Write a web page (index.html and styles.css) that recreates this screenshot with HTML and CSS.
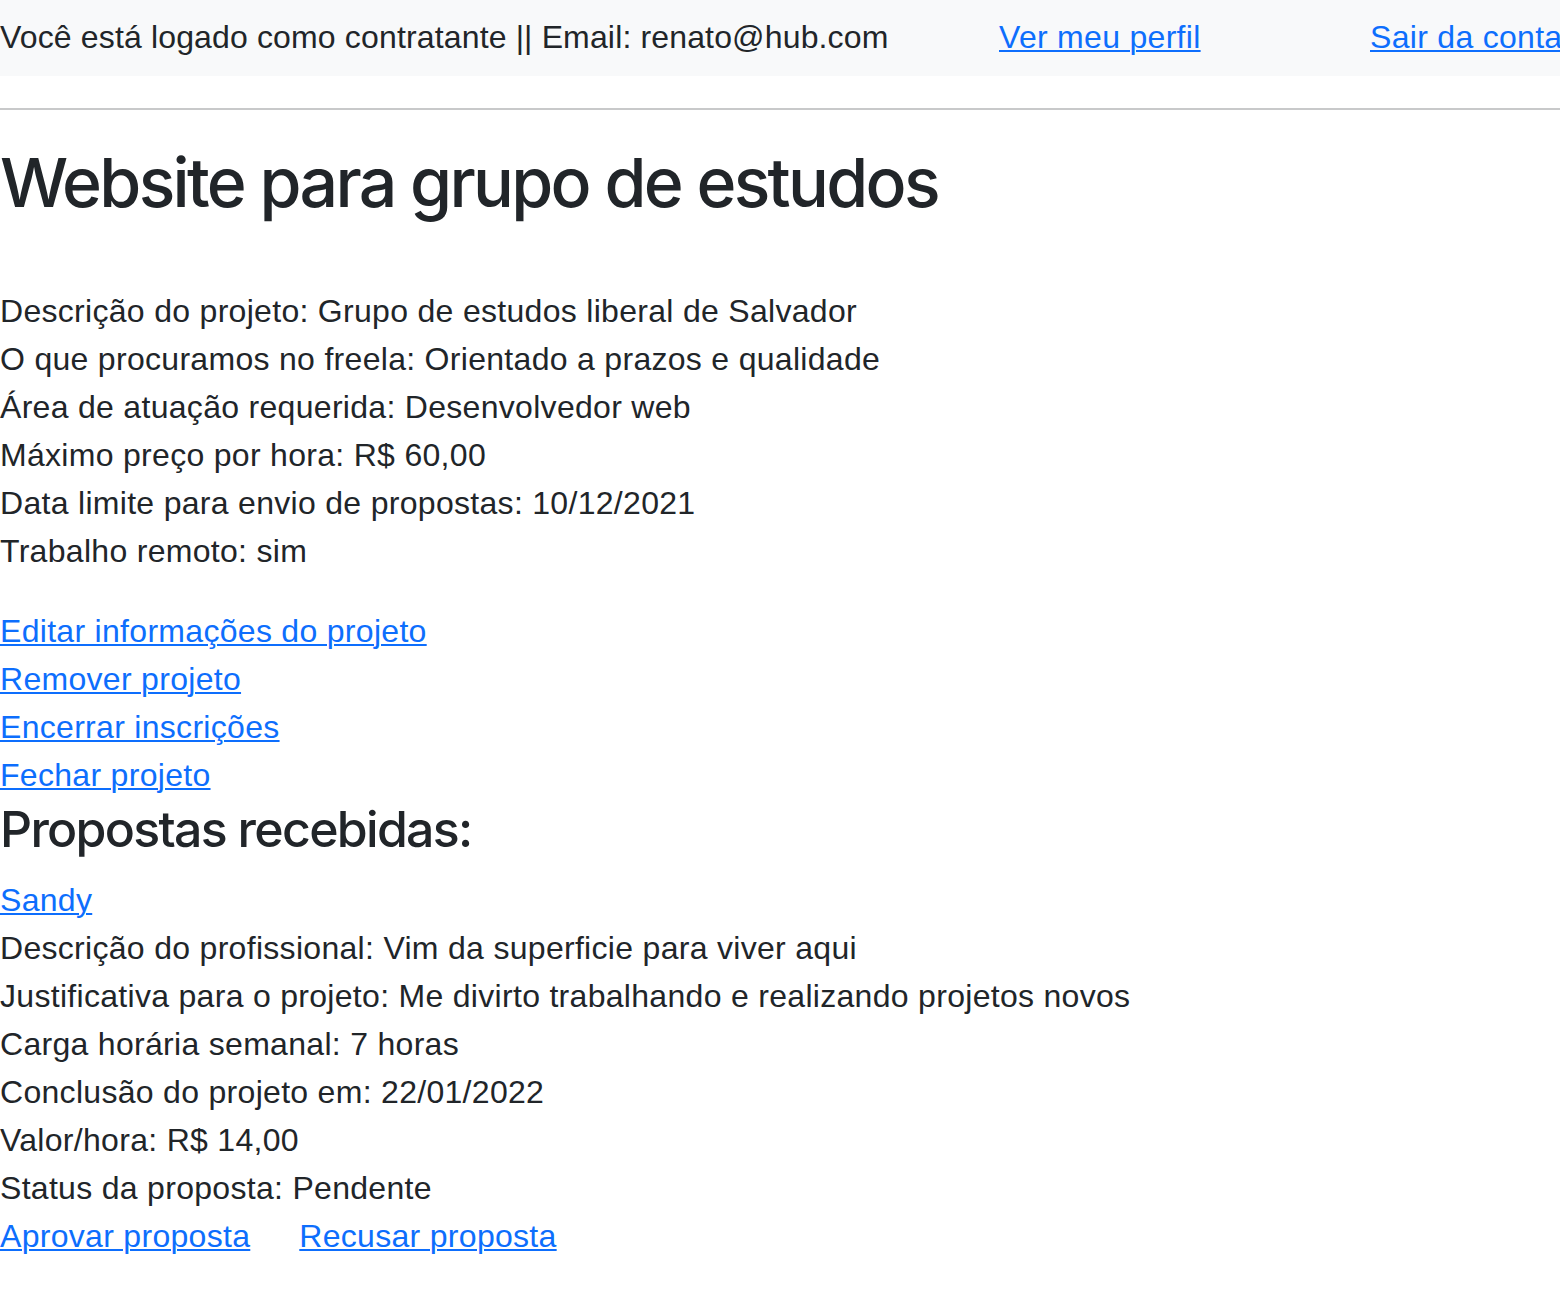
FILE: index.html
```html
<!DOCTYPE html>
<html lang="pt-BR">
<head>
<meta charset="utf-8">
<title>Projeto</title>
<link rel="stylesheet" href="styles.css">
</head>
<body>
<nav class="navbar">
  <ul class="nav-list">
    <li class="nav-item nav-user">Você está logado como contratante || Email: renato@hub.com</li>
    <li class="nav-item nav-profile"><a href="#">Ver meu perfil</a></li>
    <li class="nav-item"><a href="#">Sair da conta</a></li>
  </ul>
</nav>
<hr class="divider">
<main class="content">
  <h1 class="title">Website para grupo de estudos</h1>
  <div class="details">
    <p class="line">Descrição do projeto: Grupo de estudos liberal de Salvador</p>
    <p class="line">O que procuramos no freela: Orientado a prazos e qualidade</p>
    <p class="line">Área de atuação requerida: Desenvolvedor web</p>
    <p class="line">Máximo preço por hora: R$ 60,00</p>
    <p class="line">Data limite para envio de propostas: 10/12/2021</p>
    <p class="line">Trabalho remoto: sim</p>
  </div>
  <div class="actions">
    <a class="line-link" href="#">Editar informações do projeto</a>
    <a class="line-link" href="#">Remover projeto</a>
    <a class="line-link" href="#">Encerrar inscrições</a>
    <a class="line-link" href="#">Fechar projeto</a>
  </div>
  <h3 class="subtitle">Propostas recebidas:</h3>
  <div class="proposal">
    <a class="line-link" href="#">Sandy</a>
    <p class="line">Descrição do profissional: Vim da superficie para viver aqui</p>
    <p class="line">Justificativa para o projeto: Me divirto trabalhando e realizando projetos novos</p>
    <p class="line">Carga horária semanal: 7 horas</p>
    <p class="line">Conclusão do projeto em: 22/01/2022</p>
    <p class="line">Valor/hora: R$ 14,00</p>
    <p class="line">Status da proposta: Pendente</p>
    <div class="proposal-actions">
      <a href="#">Aprovar proposta</a>
      <a class="second" href="#">Recusar proposta</a>
    </div>
  </div>
</main>
</body>
</html>
```

FILE: styles.css
```css
html, body {
  margin: 0;
  padding: 0;
}
body {
  font-family: "Liberation Sans", Arial, sans-serif;
  font-size: 32px;
  line-height: 48px;
  letter-spacing: 0.3px;
  color: #212529;
  background: #ffffff;
  overflow-x: hidden;
}
a {
  color: #0d6efd;
  text-decoration: underline;
  text-underline-offset: 2px;
  text-decoration-thickness: 2px;
}
.navbar {
  background: #f8f9fa;
  height: 76px;
  padding: 13px 0 15px;
  box-sizing: border-box;
}
.nav-list {
  list-style: none;
  margin: 0;
  padding: 0;
  display: flex;
  white-space: nowrap;
}
.nav-user {
  flex: 0 0 999px;
  letter-spacing: 0.15px;
}
.nav-profile {
  flex: 0 0 371px;
}
.divider {
  margin: 32px 0;
  border: 0;
  border-top: 2px solid #c8c9ca;
  height: 0;
}
.content {
  display: flex;
  flex-direction: column;
  align-items: flex-start;
}
.title {
  font-family: Inter, "Liberation Sans", sans-serif;
  font-size: 68px;
  line-height: 81px;
  font-weight: 500;
  margin: 0 0 64px;
  letter-spacing: -2.7px;
}
.line {
  margin: 0;
}
.details {
  margin-bottom: 32px;
}
.actions, .proposal {
  display: flex;
  flex-direction: column;
  align-items: flex-start;
}
.subtitle {
  font-family: Inter, "Liberation Sans", sans-serif;
  font-size: 50px;
  line-height: 61px;
  font-weight: 500;
  margin: 0 0 16px;
  letter-spacing: -1.7px;
}
.proposal-actions {
  display: flex;
}
.proposal-actions .second {
  margin-left: 49px;
}
```
